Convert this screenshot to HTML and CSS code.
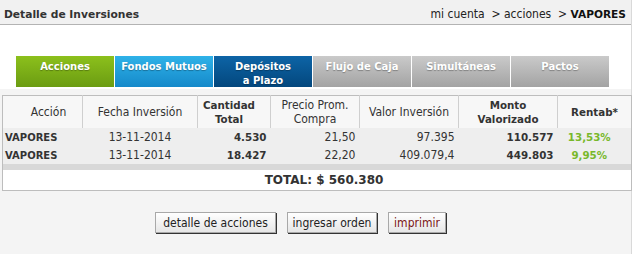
FILE: index.html
```html
<!DOCTYPE html>
<html lang="es">
<head>
<meta charset="utf-8">
<title>Detalle de Inversiones</title>
<link rel="stylesheet" href="styles.css">
</head>
<body>
<div class="page">
  <div class="topbar">
    <h1 class="title">Detalle de Inversiones</h1>
    <div class="crumbs">mi cuenta&nbsp; &gt; acciones&nbsp; &gt; <b>VAPORES</b></div>
  </div>
  <nav class="tabs">
    <a class="tab tab-green">Acciones</a>
    <a class="tab tab-cyan">Fondos Mutuos</a>
    <a class="tab tab-navy">Depósitos<br>a Plazo</a>
    <a class="tab tab-gray">Flujo de Caja</a>
    <a class="tab tab-gray">Simultáneas</a>
    <a class="tab tab-gray">Pactos</a>
  </nav>
  <div class="panel">
    <table class="grid">
      <colgroup>
        <col class="c1"><col class="c2"><col class="c3"><col class="c4"><col class="c5"><col class="c6"><col class="c7">
      </colgroup>
      <thead>
        <tr>
          <th class="h-accion">Acción</th>
          <th>Fecha Inversión</th>
          <th class="strong h-cant">Cantidad<br>Total</th>
          <th>Precio Prom.<br>Compra</th>
          <th>Valor Inversión</th>
          <th class="strong">Monto<br>Valorizado</th>
          <th class="strong">Rentab*</th>
        </tr>
      </thead>
      <tbody>
        <tr>
          <td class="name">VAPORES</td>
          <td class="ctr">13-11-2014</td>
          <td class="num strong">4.530</td>
          <td class="num">21,50</td>
          <td class="num">97.395</td>
          <td class="num strong">110.577</td>
          <td class="rent">13,53%</td>
        </tr>
        <tr>
          <td class="name">VAPORES</td>
          <td class="ctr">13-11-2014</td>
          <td class="num strong">18.427</td>
          <td class="num">22,20</td>
          <td class="num">409.079,4</td>
          <td class="num strong">449.803</td>
          <td class="rent">9,95%</td>
        </tr>
        <tr class="spacer"><td colspan="7"></td></tr>
        <tr class="total"><td colspan="7">TOTAL: $ 560.380</td></tr>
      </tbody>
    </table>
    <div class="actions">
      <button class="btn btn-wide">detalle de acciones</button>
      <button class="btn btn-mid">ingresar orden</button>
      <button class="btn btn-small btn-red">imprimir</button>
    </div>
  </div>
</div>
</body>
</html>
```

FILE: styles.css
```css
html, body {
  margin: 0;
  padding: 0;
  background: #ffffff;
}

body {
  font-family: "DejaVu Sans Condensed", "Liberation Sans", sans-serif;
  font-size: 12px;
  color: #333333;
}

.page {
  width: 631px;
  height: 254px;
  border-right: 1px solid #d9d9d9;
  display: flex;
  flex-direction: column;
}

.topbar {
  height: 25px;
  box-sizing: border-box;
  background: #f1f1f1;
  border-bottom: 1px solid #b3b3b3;
  display: flex;
  align-items: flex-end;
  justify-content: space-between;
  padding: 0 5px 3px 4px;
}

.title {
  margin: 0;
  font-family: "DejaVu Sans", sans-serif;
  font-size: 10.7px;
  font-weight: bold;
  color: #333333;
  line-height: 13px;
}

.crumbs {
  font-size: 12px;
  line-height: 13px;
  color: #222222;
}

.crumbs b {
  font-family: "DejaVu Sans", sans-serif;
  font-size: 10.6px;
  color: #111111;
}

.tabs {
  display: flex;
  gap: 1px;
  margin: 31px 0 0 16px;
  height: 31px;
}

.tab {
  width: 98px;
  box-sizing: border-box;
  padding-top: 4px;
  text-align: center;
  font-family: "DejaVu Sans", sans-serif;
  font-weight: bold;
  font-size: 10px;
  line-height: 14px;
  color: #ffffff;
  text-shadow: 0 1px 1px rgba(0, 0, 0, 0.3);
}

.tab-green { background: linear-gradient(#8cc01c, #6b9c12); }
.tab-cyan  { background: linear-gradient(#2fb2e8, #1589ca); }
.tab-navy  { background: linear-gradient(#0d64a6, #03477d); }
.tab-gray  { background: linear-gradient(#cacaca, #a3a3a3); }

.panel {
  flex: 1;
  margin-top: 2px;
  background: #f4f4f4;
  padding: 6px 0 0 2px;
}

.grid {
  width: 629px;
  table-layout: fixed;
  border-collapse: collapse;
  border: 1px solid #bdbdbd;
}

.c1 { width: 80px; }
.c2 { width: 115px; }
.c3 { width: 73px; }
.c4 { width: 89px; }
.c5 { width: 99px; }
.c6 { width: 99px; }
.c7 { width: 74px; }

.grid th {
  height: 32px;
  padding: 0;
  background: #f7f7f7;
  border-left: 1px solid #cfcfcf;
  font-weight: normal;
  line-height: 14px;
  text-align: center;
  color: #333333;
}

.grid th:first-child { border-left: none; }

.grid th.h-accion { padding-left: 12px; }
.grid th.h-cant { padding-right: 10px; }

.grid .strong {
  font-family: "DejaVu Sans", sans-serif;
  font-weight: bold;
  font-size: 10.3px;
}

.grid td {
  height: 18px;
  padding: 0;
  background: #eeeeee;
  white-space: nowrap;
  color: #333333;
}

.grid .name {
  padding-left: 2px;
  font-family: "DejaVu Sans", sans-serif;
  font-weight: bold;
  font-size: 10px;
}

.grid .ctr { text-align: center; }

.grid .num {
  text-align: right;
  padding-right: 4px;
}

.grid .rent {
  text-align: center;
  padding-right: 10px;
  font-family: "DejaVu Sans", sans-serif;
  font-weight: bold;
  font-size: 10.3px;
  color: #78b82a;
}

.grid .spacer td {
  height: 6px;
  background: #d8d8d8;
}

.grid .total td {
  height: 20px;
  background: #ffffff;
  text-align: center;
  padding-left: 14px;
  font-family: "DejaVu Sans", sans-serif;
  font-weight: bold;
  font-size: 12px;
  color: #333333;
}

.actions {
  display: flex;
  gap: 11px;
  margin-top: 21px;
  padding-left: 153px;
}

.btn {
  height: 21px;
  padding: 0;
  font-family: "DejaVu Sans Condensed", "Liberation Sans", sans-serif;
  font-size: 12px;
  color: #222222;
  background: linear-gradient(#ffffff, #e6e6e6);
  border: 1px solid #a8a8a8;
  box-shadow: 1px 1px 0 #333333;
  border-radius: 0;
}

.btn-wide { width: 121px; }
.btn-mid { width: 90px; }
.btn-small { width: 58px; }

.btn-red { color: #7a1414; }
```
